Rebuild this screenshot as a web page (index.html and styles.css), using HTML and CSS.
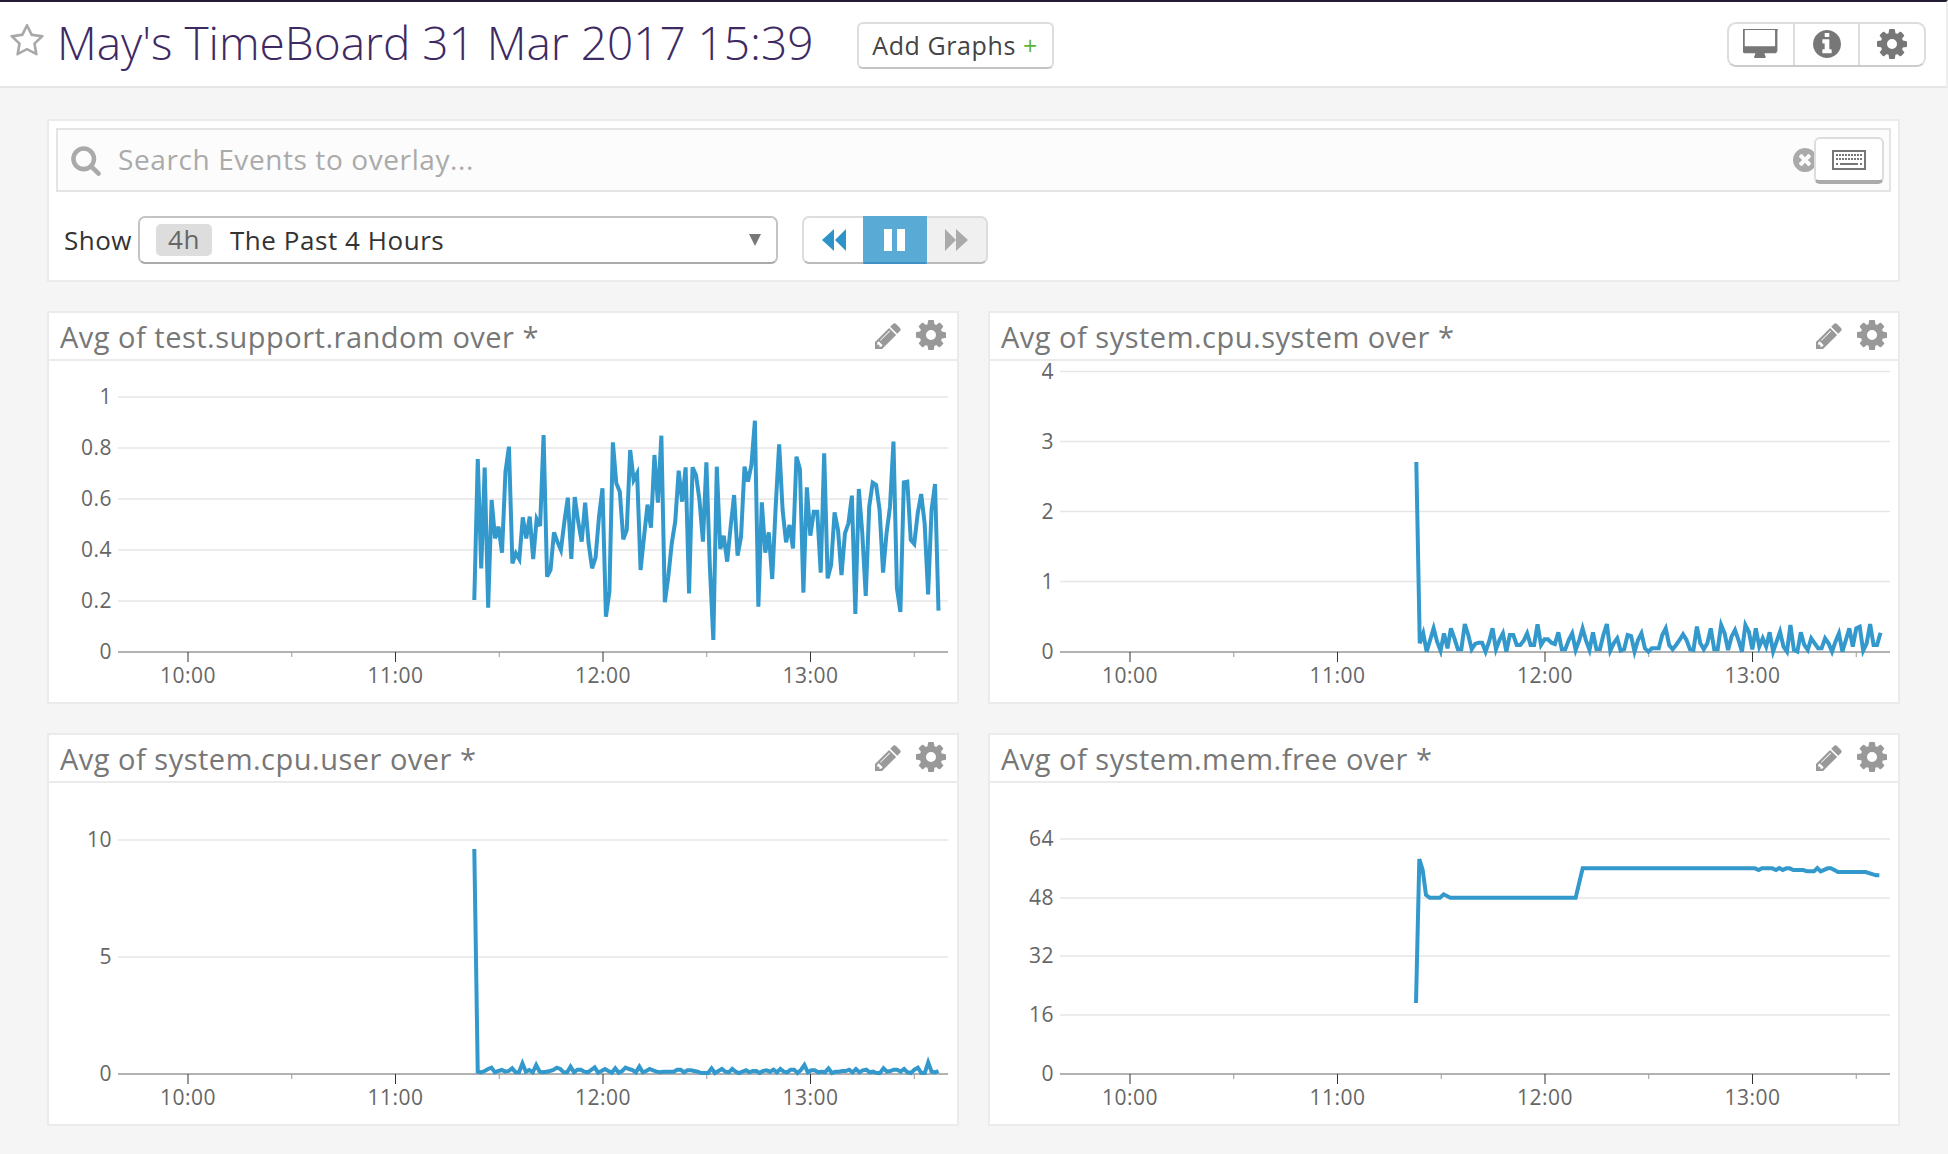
FILE: index.html
```html
<!DOCTYPE html>
<html lang="en">
<head>
    <meta charset="UTF-8">
    <title>May's TimeBoard 31 Mar 2017 15:39</title>
    <link rel="stylesheet" href="styles.css">
</head>
<body>
    <svg class="sprite" xmlns="http://www.w3.org/2000/svg">
        <symbol id="i-star" viewBox="0 0 1792 1792"><path d="M1201 1004l306-297-422-62-189-382-189 382-422 62 306 297-73 421 378-199 377 199zm527-357q0 22-26 48l-363 354 86 500q1 7 1 20 0 50-41 50-19 0-40-12l-449-236-449 236q-22 12-40 12-21 0-31.500-14.500t-10.500-35.500q0-6 2-20l86-500-364-354q-25-27-25-48 0-37 56-46l502-73 225-455q19-41 49-41t49 41l225 455 502 73q56 9 56 46z"/></symbol>
        <symbol id="i-gear" viewBox="128 128 1536 1536"><path d="M1152 896q0-106-75-181t-181-75-181 75-75 181 75 181 181 75 181-75 75-181zm512-109v222q0 12-8 23t-20 13l-185 28q-19 54-39 91 35 50 107 138 10 12 10 25t-9 23q-27 37-99 108t-94 71q-12 0-26-9l-138-108q-44 23-91 38-16 136-29 186-7 28-36 28h-222q-14 0-24.500-8.500t-11.500-21.500l-28-184q-49-16-90-37l-141 107q-10 9-25 9-14 0-25-11-126-114-165-168-7-10-7-23 0-12 8-23 15-21 51-66.500t54-70.500q-27-50-41-99l-183-27q-13-2-21-12.500t-8-23.500v-222q0-12 8-23t19-13l186-28q14-46 39-92-40-57-107-138-10-12-10-24 0-10 9-23 26-36 98.500-107.500t94.500-71.500q13 0 26 10l138 107q44-23 91-38 16-136 29-186 7-28 36-28h222q14 0 24.500 8.500t11.500 21.500l28 184q49 16 90 37l142-107q9-9 24-9 13 0 25 10 129 119 165 170 7 8 7 22 0 12-8 23-15 21-51 66.500t-54 70.500q26 50 41 98l183 28q13 2 21 12.500t8 23.500z"/></symbol>
        <symbol id="i-pencil" viewBox="128 128 1536 1536"><path d="M491 1536l91-91-235-235-91 91v107h128v128h107zm523-928q0-22-22-22-10 0-17 7l-542 542q-7 7-7 17 0 22 22 22 10 0 17-7l542-542q7-7 7-17zm-54-192l416 416-832 832h-416v-416zm683 96q0 53-37 90l-166 166-416-416 166-165q36-38 90-38 53 0 91 38l235 234q37 39 37 91z"/></symbol>
        <symbol id="i-info" viewBox="128 128 1536 1536"><path d="M1152 1376v-160q0-14-9-23t-23-9h-96v-512q0-14-9-23t-23-9h-320q-14 0-23 9t-9 23v160q0 14 9 23t23 9h96v320h-96q-14 0-23 9t-9 23v160q0 14 9 23t23 9h448q14 0 23-9t9-23zm-128-896v-160q0-14-9-23t-23-9h-192q-14 0-23 9t-9 23v160q0 14 9 23t23 9h192q14 0 23-9t9-23zm640 416q0 209-103 385.500t-279.500 279.500-385.500 103-385.500-103-279.500-279.500-103-385.500 103-385.500 279.500-279.500 385.500-103 385.500 103 279.500 279.500 103 385.500z"/></symbol>
        <symbol id="i-desktop" viewBox="0 0 1920 1536"><path transform="translate(32 -128)" d="M1728 992v-832q0-13-9.500-22.500t-22.500-9.500h-1600q-13 0-22.500 9.500t-9.500 22.500v832q0 13 9.500 22.500t22.500 9.500h1600q13 0 22.500-9.500t9.500-22.500zm128-832v1088q0 66-47 113t-113 47h-544q0 37 16 77.500t32 71 16 43.500q0 26-19 45t-45 19h-512q-26 0-45-19t-19-45q0-14 16-44t32-70 16-78h-544q-66 0-113-47t-47-113v-1088q0-66 47-113t113-47h1632q66 0 113 47t47 113z" transform-origin="0 128"/></symbol>
        <symbol id="i-search" viewBox="0 0 1792 1792"><path d="M1216 832q0-185-131.500-316.500t-316.500-131.500-316.500 131.500-131.500 316.500 131.500 316.500 316.500 131.500 316.500-131.500 131.500-316.500zm512 832q0 52-38 90t-90 38q-54 0-90-38l-343-342q-179 124-399 124-143 0-273.500-55.500t-225-150-150-225-55.500-273.500 55.500-273.500 150-225 225-150 273.500-55.500 273.500 55.500 225 150 150 225 55.500 273.500q0 220-124 399l343 343q37 37 37 90z"/></symbol>
        <symbol id="i-clear" viewBox="128 128 1536 1536"><path d="M1277 1122q0-26-19-45l-181-181 181-181q19-19 19-45 0-27-19-46l-90-90q-19-19-46-19-26 0-45 19l-181 181-181-181q-19-19-45-19-27 0-46 19l-90 90q-19 19-19 46 0 26 19 45l181 181-181 181q-19 19-19 45 0 27 19 46l90 90q19 19 46 19 26 0 45-19l181-181 181 181q19 19 45 19 27 0 46-19l90-90q19-19 19-46zm387-226q0 209-103 385.500t-279.500 279.500-385.500 103-385.500-103-279.500-279.500-103-385.500 103-385.500 279.500-279.500 385.500-103 385.500 103 279.500 279.500 103 385.500z"/></symbol>
        <symbol id="i-back" viewBox="0 0 24 22"><polygon points="12,0 12,22 0,11"/><polygon points="24,0 24,22 13,11"/></symbol>
        <symbol id="i-forward" viewBox="0 0 24 22"><polygon points="12,0 12,22 23,11" transform="translate(-11 0)"/><polygon points="12,0 24,11 12,22"/></symbol>
    </svg>

    <header class="topbar">
        <svg class="star"><use href="#i-star"/></svg>
        <h1 class="board-title">May's TimeBoard 31 Mar 2017 15:39</h1>
        <button class="add-graphs">Add Graphs <span class="plus">+</span></button>
        <div class="tools">
            <div class="tool"><svg class="tool-desktop"><use href="#i-desktop"/></svg></div>
            <div class="tool"><svg class="tool-info"><use href="#i-info"/></svg></div>
            <div class="tool"><svg class="tool-gear"><use href="#i-gear"/></svg></div>
        </div>
    </header>

    <main class="board">
        <section class="controls">
            <div class="search">
                <svg class="search-icon"><use href="#i-search"/></svg>
                <input class="search-input" type="text" placeholder="Search Events to overlay...">
                <svg class="search-clear"><use href="#i-clear"/></svg>
                <div class="keyboard">
                    <svg width="34" height="20" viewBox="0 0 34 20">
                        <rect x="1" y="1" width="32" height="18" fill="none" stroke="#777" stroke-width="2"/>
                        <path d="M4 5h26M4 9h26" stroke="#777" stroke-width="2" stroke-dasharray="2 1"/>
                        <path d="M4 14h2M8 14h18M28 14h2" stroke="#777" stroke-width="2"/>
                    </svg>
                </div>
            </div>
            <div class="show-row">
                <span class="show-label">Show</span>
                <div class="timeframe">
                    <span class="badge">4h</span>
                    <span class="timeframe-text">The Past 4 Hours</span>
                    <span class="caret"></span>
                </div>
                <div class="player">
                    <div class="player-btn"><svg class="player-back"><use href="#i-back"/></svg></div>
                    <div class="player-btn active"><span class="bar"></span><span class="bar"></span></div>
                    <div class="player-btn off"><svg class="player-forward"><use href="#i-forward"/></svg></div>
                </div>
            </div>
        </section>

        <section class="graphs">
            <article class="card">
                <div class="card-head">
                    <span class="card-title">Avg of test.support.random over *</span>
                    <svg class="card-pencil"><use href="#i-pencil"/></svg>
                    <svg class="card-gear"><use href="#i-gear"/></svg>
                </div>
                <svg class="chart" id="chart-random"></svg>
            </article>
            <article class="card">
                <div class="card-head">
                    <span class="card-title">Avg of system.cpu.system over *</span>
                    <svg class="card-pencil"><use href="#i-pencil"/></svg>
                    <svg class="card-gear"><use href="#i-gear"/></svg>
                </div>
                <svg class="chart" id="chart-system"></svg>
            </article>
            <article class="card">
                <div class="card-head">
                    <span class="card-title">Avg of system.cpu.user over *</span>
                    <svg class="card-pencil"><use href="#i-pencil"/></svg>
                    <svg class="card-gear"><use href="#i-gear"/></svg>
                </div>
                <svg class="chart" id="chart-user"></svg>
            </article>
            <article class="card">
                <div class="card-head">
                    <span class="card-title">Avg of system.mem.free over *</span>
                    <svg class="card-pencil"><use href="#i-pencil"/></svg>
                    <svg class="card-gear"><use href="#i-gear"/></svg>
                </div>
                <svg class="chart" id="chart-mem"></svg>
            </article>
        </section>
    </main>

    <script src="charts.js"></script>
</body>
</html>
```

FILE: styles.css
```css
* {
    box-sizing: border-box;
}
body {
    margin: 0;
    font-family: "Open Sans", Arial, sans-serif;
    background-color: #f5f5f5;
    color: #333;
}
.sprite {
    display: none;
}

/* top bar */
.topbar {
    height: 88px;
    display: flex;
    align-items: center;
    padding: 0 20px 0 9px;
    background-color: #fff;
    border-top: 2px solid #231c33;
    border-bottom: 2px solid #e6e6e6;
    border-right: 2px solid #eee;
}
.star {
    width: 36px;
    height: 36px;
    margin-top: -6px;
    fill: #a8a8a8;
}
.board-title {
    margin: -5px 0 0 12px;
    font-size: 46px;
    font-weight: 300;
    color: #3e2a63;
    white-space: nowrap;
}
.add-graphs {
    margin: 2px 0 0 43px;
    width: 197px;
    height: 47px;
    padding: 0;
    font-family: inherit;
    font-size: 25px;
    letter-spacing: 0.6px;
    color: #444;
    background-color: #fff;
    border: 2px solid #ddd;
    border-bottom-color: #c4c4c4;
    border-radius: 6px;
}
.plus {
    color: #5cb531;
}
.tools {
    margin-left: auto;
    width: 199px;
    height: 45px;
    display: flex;
    border: 2px solid #ddd;
    border-bottom-color: #ccc;
    border-radius: 9px;
}
.tool {
    flex: 1;
    display: flex;
    align-items: center;
    justify-content: center;
    fill: #777;
    border-left: 2px solid #ddd;
}
.tool:first-child {
    border-left: 0;
}
.tool-desktop {
    width: 35px;
    height: 30px;
}
.tool-info {
    width: 28px;
    height: 28px;
}
.tool-gear {
    width: 30px;
    height: 30px;
}

/* board */
.board {
    padding: 31px 48px 30px 47px;
}
.controls {
    height: 163px;
    padding: 7px;
    background-color: #fff;
    border: 2px solid #ebebeb;
}
.search {
    position: relative;
    height: 64px;
    display: flex;
    align-items: center;
    padding-left: 12px;
    background-color: #fcfcfc;
    border: 2px solid #e4e4e4;
}
.search-icon {
    width: 32px;
    height: 32px;
    fill: #aaa;
}
.search-input {
    flex: 1;
    margin: -2px 0 0 16px;
    padding: 0;
    font-family: inherit;
    font-size: 28px;
    letter-spacing: 0.6px;
    background: transparent;
    border: 0;
    outline: 0;
}
.search-input::placeholder {
    color: #aaa;
    opacity: 1;
}
.search-clear {
    position: absolute;
    right: 72px;
    top: 18px;
    width: 24px;
    height: 24px;
    fill: #aaa;
}
.keyboard {
    position: absolute;
    right: 5px;
    top: 7px;
    width: 70px;
    height: 47px;
    display: flex;
    align-items: center;
    justify-content: center;
    background-color: #fff;
    border: 2px solid #ddd;
    border-bottom: 4px solid #aaa;
    border-radius: 6px;
}
.show-row {
    margin-top: 24px;
    display: flex;
    align-items: center;
    padding-left: 8px;
}
.show-label {
    width: 74px;
    font-size: 26px;
    letter-spacing: 0.5px;
}
.timeframe {
    width: 640px;
    height: 48px;
    display: flex;
    align-items: center;
    padding: 0 15px 0 16px;
    font-size: 26px;
    letter-spacing: 0.55px;
    border: 2px solid #c4c4c4;
    border-bottom-color: #aaa;
    border-radius: 7px;
}
.badge {
    width: 56px;
    height: 32px;
    line-height: 31px;
    text-align: center;
    color: #666;
    background-color: #ddd;
    border-radius: 5px;
}
.timeframe-text {
    margin-left: 18px;
}
.caret {
    margin-left: auto;
    width: 0;
    height: 0;
    border-left: 6px solid transparent;
    border-right: 6px solid transparent;
    border-top: 12px solid #777;
}
.player {
    margin-left: 24px;
    width: 186px;
    height: 48px;
    display: flex;
}
.player-btn {
    flex: 1;
    display: flex;
    align-items: center;
    justify-content: center;
    gap: 5px;
    border: 2px solid #ddd;
    border-bottom-color: #bbb;
}
.player-btn:first-child {
    border-radius: 7px 0 0 7px;
    border-right: 0;
}
.player-btn:last-child {
    border-radius: 0 7px 7px 0;
    border-left: 0;
}
.player-btn.active {
    background-color: #5aaad6;
    border-color: #5aaad6;
    border-bottom-color: #3d8fc4;
}
.player-btn.off {
    background-color: #f0f0f0;
}
.player-back {
    width: 24px;
    height: 22px;
    fill: #2e93c9;
}
.player-forward {
    width: 24px;
    height: 22px;
    fill: #aaa;
}
.bar {
    width: 8px;
    height: 22px;
    background-color: #fff;
}

/* graph cards */
.graphs {
    margin-top: 29px;
    display: grid;
    grid-template-columns: 912px 912px;
    column-gap: 29px;
    row-gap: 29px;
}
.card {
    background-color: #fff;
    border: 2px solid #ebebeb;
}
.card-head {
    height: 48px;
    display: flex;
    align-items: center;
    padding: 0 11px 0 11px;
    border-bottom: 2px solid #ebebeb;
}
.card-title {
    margin-right: auto;
    font-size: 29px;
    letter-spacing: 0.5px;
    color: #777;
}
.card-pencil {
    width: 26px;
    height: 26px;
    fill: #999;
}
.card-gear {
    margin-left: 15px;
    width: 30px;
    height: 30px;
    margin-top: -3px;
    fill: #999;
}
.chart {
    display: block;
    width: 100%;
    height: 341px;
    overflow: visible;
}
.card:nth-child(even) .chart {
    margin-left: 1px;
    width: calc(100% - 1px);
}
.grid-line {
    stroke: #e6e6e6;
    stroke-width: 1.5;
}
.axis-line {
    stroke: #999;
    stroke-width: 1.5;
}
.tick-major {
    stroke: #333;
    stroke-width: 1;
}
.tick-minor {
    stroke: #999;
    stroke-width: 1;
}
.axis-label {
    font-size: 21px;
    letter-spacing: 0.5px;
    fill: #666;
}
.trace {
    fill: none;
    stroke: #3399cc;
    stroke-width: 4;
    stroke-linejoin: miter;
}
```

FILE: charts.js
```js
// px positions are local to each chart svg
const BASE_Y = 291;
const PLOT_LEFT = 69;
const PLOT_RIGHT = 899;
const FIRST_TICK = 139;
const HOUR = 207.5;
const HOURS = ['10:00', '11:00', '12:00', '13:00'];
const TRACE_START = 425.3;
const TRACE_END = 889.5;

// sampled heights of the traces, one per minute
const randomRaw = [600,177,505,203,623,300,415,380,458,215,140,490,460,478,352,415,350,477,357,378,105,530,510,397,425,450,365,293,477,291,365,425,308,430,505,473,350,265,650,575,127,250,275,418,390,150,240,220,510,410,314,383,165,308,107,607,530,430,365,212,305,202,580,202,225,300,
    425,187,500,720,200,447,407,485,380,285,467,410,200,245,195,62,620,307,458,397,537,320,133,330,427,375,445,170,207,578,262,407,335,335,518,160,535,495,337,390,525,400,370,287,642,267,400,588,320,248,255,330,518,400,320,125,565,636,247,245,420,432,340,282,370,583,330,252,632];

const systemRaw = [130,100,155,120,85,125,152,100,145,85,115,148,148,72,105,148,132,128,128,155,125,85,148,120,100,155,105,105,135,135,122,100,135,135,73,135,118,118,128,132,97,148,148,120,100,150,122,85,122,150,97,148,148,105,72,152,130,115,152,148,105,108,155,120,100,145,155,145,145,145,105,85,135,148,135,120,103,120,148,150,80,130,148,130,85,148,148,75,100,150,110,90,120,155,75,95,148,85,140,115,140,97,155,125,95,140,155,75,150,155,97,135,150,115,130,145,145,115,130,155,125,100,155,120,85,140,85,80,152,130,72,135,135,98];

const userRaw = [80,82,78,72,68,82,78,75,80,78,70,82,82,55,80,75,82,60,80,82,80,78,75,68,72,82,82,65,82,74,74,80,82,75,67,83,78,72,78,83,70,83,78,68,72,75,82,65,82,78,72,76,80,82,80,80,80,80,74,74,82,76,76,78,80,84,84,84,70,84,78,72,80,82,72,80,84,80,76,82,78,78,84,78,76,80,74,82,72,80,82,74,74,84,75,60,82,76,76,82,80,82,70,84,80,80,78,78,74,82,72,82,76,74,82,80,84,84,70,80,78,74,74,80,72,82,84,74,68,84,84,52,80,82,78];

const memRaw = [[58,57],[68,90],[78,165],[89,173],[120,173],[131,163],[151,173],[527,173],[548,85],[1065,85],[1076,90],[1086,85],[1117,85],[1128,90],[1138,84],[1148,90],[1159,85],[1169,85],[1180,90],[1210,90],[1221,94],[1242,94],[1252,84],[1262,94],[1283,85],[1293,85],[1314,96],[1397,96],[1428,106],[1438,106]];

function evenly(ys) {
    const step = (TRACE_END - TRACE_START) / (ys.length - 1);
    return ys.map((y, i) => [TRACE_START + i * step, y]);
}

function svgEl(parent, tag, attrs, text) {
    const el = document.createElementNS('http://www.w3.org/2000/svg', tag);
    for (const key in attrs) {
        el.setAttribute(key, attrs[key]);
    }
    if (text !== undefined) {
        el.textContent = text;
    }
    parent.appendChild(el);
    return el;
}

function drawChart(id, yTicks, points) {
    const svg = document.getElementById(id);

    yTicks.forEach(([y, label]) => {
        if (y !== BASE_Y) {
            svgEl(svg, 'line', { x1: PLOT_LEFT, x2: PLOT_RIGHT, y1: y, y2: y, class: 'grid-line' });
        }
        svgEl(svg, 'text', { x: 63, y: y + 7, 'text-anchor': 'end', class: 'axis-label' }, label);
    });

    svgEl(svg, 'line', { x1: PLOT_LEFT, x2: PLOT_RIGHT, y1: BASE_Y, y2: BASE_Y, class: 'axis-line' });

    HOURS.forEach((label, i) => {
        const x = FIRST_TICK + i * HOUR;
        svgEl(svg, 'line', { x1: x, x2: x, y1: BASE_Y, y2: BASE_Y + 10, class: 'tick-major' });
        svgEl(svg, 'line', { x1: x + HOUR / 2, x2: x + HOUR / 2, y1: BASE_Y, y2: BASE_Y + 5, class: 'tick-minor' });
        svgEl(svg, 'text', { x: x, y: 322, 'text-anchor': 'middle', class: 'axis-label' }, label);
    });

    svgEl(svg, 'polyline', { points: points.map(p => p.join(',')).join(' '), class: 'trace' });
}

drawChart('chart-random',
    [[36, '1'], [87, '0.8'], [138, '0.6'], [189, '0.4'], [240, '0.2'], [291, '0']],
    evenly(randomRaw.map(v => 39 + v / 3)));

drawChart('chart-system',
    [[10.5, '4'], [80.5, '3'], [150.5, '2'], [220.5, '1'], [291, '0']],
    evenly([101].concat(systemRaw.map(v => 239 + v / 3))));

drawChart('chart-user',
    [[57, '10'], [174, '5'], [291, '0']],
    evenly([66].concat(userRaw.map(v => 262 + v / 3))));

drawChart('chart-mem',
    [[56, '64'], [115, '48'], [173, '32'], [232, '16'], [291, '0']],
    [[425, 220]].concat(memRaw.map(([x, y]) => [409 + x / 3, 57 + y / 3])));
```
